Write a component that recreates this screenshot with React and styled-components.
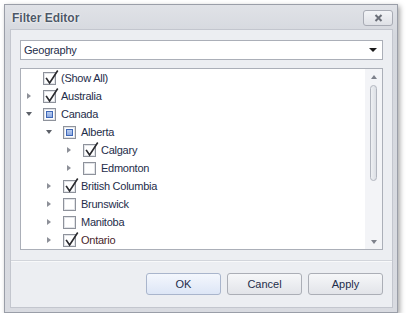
import React from 'react'
import styled, { createGlobalStyle } from 'styled-components'

const GlobalStyle = createGlobalStyle`
    body {
        margin: 0;
        background: #ffffff;
        font-family: "Liberation Sans", Arial, sans-serif;
    }
`;

const Window = styled.div`
    margin: 4px 0 0 4px;
    width: 394px;
    height: 309px;
    box-sizing: border-box;
    border: 1px solid #9a9ea8;
    background: linear-gradient(#e0e2e7, #d5d8de 30px, #d9dbe1);
    box-shadow: 2px 2px 5px rgba(0, 0, 0, 0.35);
    display: flex;
    flex-direction: column;
    padding: 0 4px 4px 5px;
`;

const TitleBar = styled.div`
    height: 24px;
    display: flex;
    align-items: center;
    justify-content: space-between;
    padding: 0 0 0 2px;
`;

const Title = styled.div`
    font-size: 12px;
    font-weight: bold;
    color: #4e5868;
    text-shadow: 0 0 3px #ffffff, 0 0 1px #ffffff;
    margin-top: 1px;
`;

const CloseButton = styled.div`
    width: 28px;
    height: 14px;
    margin-top: 2px;
    border: 1px solid #a8abb4;
    border-radius: 3px;
    background: linear-gradient(#f3f4f7, #dfe1e6);
    display: flex;
    align-items: center;
    justify-content: center;
`;

const Panel = styled.div`
    flex: 1;
    border: 1px solid #c3c6ce;
    background: #eceef2;
    display: flex;
    flex-direction: column;
`;

const Body = styled.div`
    padding: 10px 9px 0 9px;
    display: flex;
    flex-direction: column;
    gap: 8px;
`;

const Combo = styled.div`
    height: 18px;
    border: 1px solid #abafb8;
    background: #ffffff;
    display: flex;
    align-items: center;
    justify-content: space-between;
    padding: 0 5px 0 3px;
    font-size: 11px;
    letter-spacing: -0.2px;
    color: #1e2d4a;
`;

const DropArrow = styled.div`
    width: 0;
    height: 0;
    border-left: 4px solid transparent;
    border-right: 4px solid transparent;
    border-top: 4px solid #1a1a1a;
`;

const List = styled.div`
    height: 180px;
    border: 1px solid #abafb8;
    background: #ffffff;
    display: flex;
`;

const Rows = styled.div`
    flex: 1;
`;

const Row = styled.div`
    height: 18px;
    display: flex;
    align-items: center;
    padding-left: ${p => p.$level * 20 + 1}px;
    font-size: 11px;
    letter-spacing: -0.25px;
    color: ${p => p.$hot ? '#4a1f2c' : '#1e2d4a'};
`;

const Expander = styled.div`
    width: 21px;
    height: 18px;
    display: flex;
    align-items: center;
    padding-left: ${p => p.$open ? 4 : 5}px;
    box-sizing: border-box;
`;

const ArrowRight = styled.div`
    width: 0;
    height: 0;
    border-top: 3.5px solid transparent;
    border-bottom: 3.5px solid transparent;
    border-left: 4px solid #8d9098;
`;

const ArrowDown = styled.div`
    width: 0;
    height: 0;
    border-left: 3.5px solid transparent;
    border-right: 3.5px solid transparent;
    border-top: 4px solid #5c6068;
`;

const Box = styled.div`
    position: relative;
    width: 13px;
    height: 13px;
    box-sizing: border-box;
    border: 1px solid #8e929b;
    background: #ffffff;
    box-shadow: inset 0 0 0 1px #e2e4e8;
    margin-right: 5px;
    flex: none;
    display: flex;
    align-items: center;
    justify-content: center;
`;

const Partial = styled.div`
    width: 7px;
    height: 7px;
    box-sizing: border-box;
    border: 1px solid #3f68b8;
    background: linear-gradient(#b9cdf0, #8eaae0);
`;

const Check = styled.svg`
    position: absolute;
    left: -1px;
    top: -4px;
    width: 17px;
    height: 17px;
    overflow: visible;
`;

const ScrollBar = styled.div`
    width: 17px;
    background: #f3f4f7;
    display: flex;
    flex-direction: column;
    align-items: center;
    padding: 6px 0 5px;
    box-sizing: border-box;
`;

const ScrollUp = styled.div`
    width: 0;
    height: 0;
    border-left: 3.5px solid transparent;
    border-right: 3.5px solid transparent;
    border-bottom: 4px solid #7d818b;
`;

const ScrollDown = styled.div`
    width: 0;
    height: 0;
    border-left: 3.5px solid transparent;
    border-right: 3.5px solid transparent;
    border-top: 4px solid #7d818b;
    margin-top: auto;
`;

const Thumb = styled.div`
    width: 7px;
    height: 96px;
    margin-top: 6px;
    box-sizing: border-box;
    border: 1px solid #b2b6bf;
    border-radius: 4px;
    background: linear-gradient(90deg, #eef0f3, #dcdfe5);
`;

const Separator = styled.div`
    margin-top: 10px;
    height: 1px;
    background: #d2d5db;
    box-shadow: 0 1px 0 #f8f9fa;
`;

const Footer = styled.div`
    display: flex;
    justify-content: flex-end;
    gap: 6px;
    padding: 12px 9px 0 0;
`;

const Button = styled.div`
    width: 75px;
    height: 22px;
    box-sizing: border-box;
    border: 1px solid ${p => p.$primary ? '#a9b5cc' : '#abaeb6'};
    border-radius: 3px;
    background: ${p => p.$primary
        ? 'linear-gradient(#f4f7fd, #dde6f6)'
        : 'linear-gradient(#f6f7f9, #e2e4e9)'};
    display: flex;
    align-items: center;
    justify-content: center;
    font-size: 11px;
    color: #1e2d4a;
`;

const items = [
    { label: '(Show All)', level: 0, state: 'on', arrow: null },
    { label: 'Australia', level: 0, state: 'on', arrow: 'closed' },
    { label: 'Canada', level: 0, state: 'part', arrow: 'open' },
    { label: 'Alberta', level: 1, state: 'part', arrow: 'open' },
    { label: 'Calgary', level: 2, state: 'on', arrow: 'closed' },
    { label: 'Edmonton', level: 2, state: 'off', arrow: 'closed' },
    { label: 'British Columbia', level: 1, state: 'on', arrow: 'closed' },
    { label: 'Brunswick', level: 1, state: 'off', arrow: 'closed' },
    { label: 'Manitoba', level: 1, state: 'off', arrow: 'closed' },
    { label: 'Ontario', level: 1, state: 'on', arrow: 'closed', hot: true },
]

function CheckBox({ state }) {
    return (
        <Box>
            {state === 'part' && <Partial />}
            {state === 'on' && (
                <Check viewBox="0 0 17 17">
                    <path d="M3.5 9.5 L6.6 14 L14.3 2.2" fill="none" stroke="#2a2a2e" strokeWidth="1.6" strokeLinecap="square" />
                </Check>
            )}
        </Box>
    )
}

export default function App() {
    return (
        <>
            <GlobalStyle />
            <Window>
                <TitleBar>
                    <Title>Filter Editor</Title>
                    <CloseButton>
                        <svg width="9" height="8" viewBox="0 0 9 8">
                            <path d="M1.5 1 L7.5 7 M7.5 1 L1.5 7" stroke="#6b6f78" strokeWidth="2" />
                        </svg>
                    </CloseButton>
                </TitleBar>
                <Panel>
                    <Body>
                        <Combo>
                            <span>Geography</span>
                            <DropArrow />
                        </Combo>
                        <List>
                            <Rows>
                                {items.map(item => (
                                    <Row key={item.label} $level={item.level} $hot={item.hot}>
                                        <Expander $open={item.arrow === 'open'}>
                                            {item.arrow === 'closed' && <ArrowRight />}
                                            {item.arrow === 'open' && <ArrowDown />}
                                        </Expander>
                                        <CheckBox state={item.state} />
                                        <span>{item.label}</span>
                                    </Row>
                                ))}
                            </Rows>
                            <ScrollBar>
                                <ScrollUp />
                                <Thumb />
                                <ScrollDown />
                            </ScrollBar>
                        </List>
                    </Body>
                    <Separator />
                    <Footer>
                        <Button $primary>OK</Button>
                        <Button>Cancel</Button>
                        <Button>Apply</Button>
                    </Footer>
                </Panel>
            </Window>
        </>
    )
}
